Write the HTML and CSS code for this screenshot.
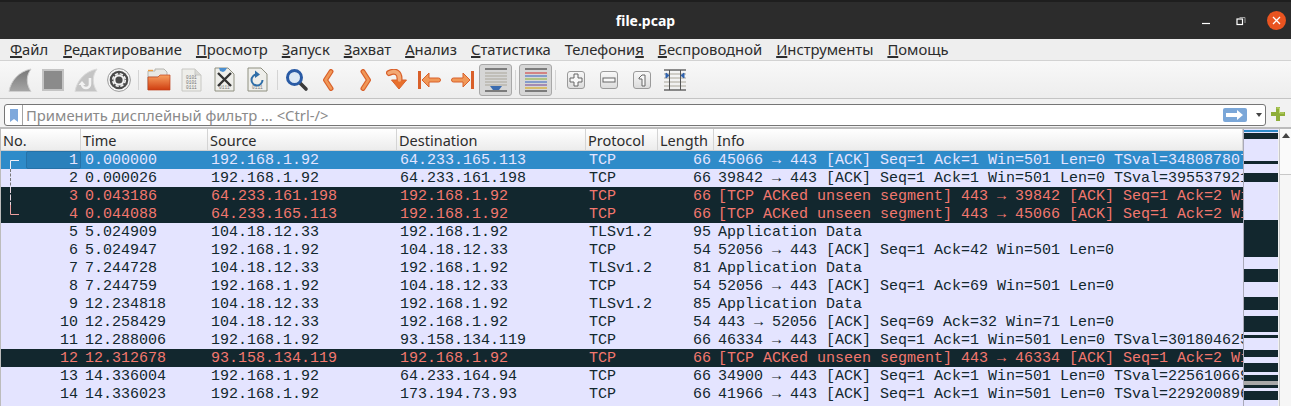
FILE: index.html
```html
<!DOCTYPE html>
<html lang="ru">

<head>
    <meta charset="UTF-8">
    <meta name="viewport" content="width=device-width, initial-scale=1.0">
    <title>file.pcap</title>
    <link rel="stylesheet" href="styles.css">
</head>

<body>
    <header class="titlebar">
        <div class="title">file.pcap</div>
        <div class="wm-buttons">
            <svg class="wm-min" width="10" height="10" viewBox="0 0 10 10"><path d="M1 7.500h8" stroke="#fff" stroke-width="1.2"/></svg>
            <svg class="wm-max" width="10" height="10" viewBox="0 0 10 10"><path d="M3.500 1.500h5.500v5.500" fill="none" stroke="#999" stroke-width="1"/><rect x="1" y="3" width="5.500" height="5.500" fill="none" stroke="#fff" stroke-width="1.2"/></svg>
            <svg class="wm-close" width="19" height="19" viewBox="0 0 19 19"><circle cx="9.500" cy="9.500" r="9.500" fill="#e95420"/><path d="M6 6l7 7M13 6l-7 7" stroke="#fff" stroke-width="1.3"/></svg>
        </div>
    </header>

    <nav class="menubar">
        <span><u>Ф</u>айл</span>
        <span><u>Р</u>едактирование</span>
        <span><u>П</u>росмотр</span>
        <span><u>З</u>апуск</span>
        <span><u>З</u>ахват</span>
        <span><u>А</u>нализ</span>
        <span><u>С</u>татистика</span>
        <span>Телефони<u>я</u></span>
        <span><u>Б</u>еспроводной</span>
        <span><u>И</u>нструменты</span>
        <span><u>П</u>омощь</span>
    </nav>

    <div class="toolbar">
        <div class="tool"><svg width="24" height="26" viewBox="0 0 24 26"><path d="M1 24.500C3 13 11 4.500 23 2c-5 7-5 15 0 22.500z" fill="url(#fin)" stroke="#cfcfcf"/><defs><linearGradient id="fin" x1="0" y1="0" x2="0" y2="1"><stop offset="0" stop-color="#777"/><stop offset="1" stop-color="#a6a6a6"/></linearGradient></defs></svg></div>
        <div class="tool"><svg width="24" height="24" viewBox="0 0 24 24"><rect x="2" y="2" width="20" height="20" fill="#8b8b8b" stroke="#c4c4c4" stroke-width="2"/></svg></div>
        <div class="tool"><svg width="24" height="26" viewBox="0 0 24 26"><path d="M1 24.500C3 13 11 4.500 23 2c-5 7-5 15 0 22.500z" fill="#c4c4c4" stroke="#dadada"/><path d="M16 11v6a4 4 0 0 1-8 0" fill="none" stroke="#f2f2f2" stroke-width="2.600"/><path d="M4.500 18l3.500-4 3.500 4z" fill="#f2f2f2"/></svg></div>
        <div class="tool"><svg width="24" height="24" viewBox="0 0 24 24"><circle cx="12" cy="12" r="11.400" fill="#f6f6f6" stroke="#9a9a9a"/><circle cx="12" cy="12" r="9.300" fill="#4a4a4a"/><circle cx="12" cy="12" r="6.300" fill="none" stroke="#f2f2f2" stroke-width="1.600" stroke-dasharray="3.300 1.650"/><circle cx="12" cy="12" r="4.600" fill="none" stroke="#f2f2f2" stroke-width="2"/></svg></div>
        <div class="sep"></div>
        <div class="tool"><svg width="24" height="23" viewBox="0 0 24 23"><path d="M1 22V3h7v-2h9l3 3v5H1z" fill="#e8e8e4" stroke="#b5b5b0"/><path d="M1 2.500h5" stroke="#f0a040" stroke-width="1.400"/><path d="M1 9h10l2-2h10v15H1z" fill="url(#folder)" stroke="#c0411a" stroke-width=".7"/><defs><linearGradient id="folder" x1="0" y1="0" x2="0" y2="1"><stop offset="0" stop-color="#f8a060"/><stop offset="1" stop-color="#cf3d10"/></linearGradient></defs></svg></div>
        <div class="tool"><svg width="21" height="24" viewBox="0 0 21 24"><path d="M1 1h13l6 6v16H1z" fill="#eeeeea" stroke="#c8c8c4"/><path d="M14 1v6h6" fill="#d8d8d4" stroke="#c8c8c4"/><text class="bits" x="5" y="11">0101</text><text class="bits" x="5" y="16">0101</text><text class="bits" x="5" y="21">0111</text></svg></div>
        <div class="tool"><svg width="21" height="25" viewBox="0 0 21 25"><path d="M1 1h13l6 6v17H1z" fill="#eeeeea" stroke="#8f9080"/><path d="M5 1h8l-2 3-2 1-3-1z" fill="#4c8fd0"/><text class="bits" x="5" y="22">0111</text><path d="M4 6l13 13M17 6L4 19" stroke="#333" stroke-width="2.400"/></svg></div>
        <div class="tool"><svg width="21" height="25" viewBox="0 0 21 25"><path d="M1 1h13l6 6v17H1z" fill="#eeeeea" stroke="#8f9080"/><text class="bits" x="5" y="22">0111</text><path d="M15.500 13a5.500 5.500 0 1 1-5.500-5.500" fill="none" stroke="#2f6ea8" stroke-width="2"/><path d="M8 3.500l5 4-5 3.500z" fill="#2f6ea8"/></svg></div>
        <div class="sep"></div>
        <div class="tool"><svg width="24" height="24" viewBox="0 0 24 24"><path d="M13 14l7 7" stroke="#3b3b3b" stroke-width="3.600" stroke-linecap="round"/><circle cx="8.500" cy="9.500" r="7" fill="#dbe8f5" stroke="#2a5ba5" stroke-width="3"/></svg></div>
        <div class="tool"><svg width="16" height="22" viewBox="0 0 16 22"><path class="arrow-edge" d="M8 2.500L2.500 11 8 19.500"/><path class="arrow-fill" d="M8 2.500L2.500 11 8 19.500"/></svg></div>
        <div class="tool"><svg width="16" height="22" viewBox="0 0 16 22"><path class="arrow-edge" d="M7 2.500L12.500 11 7 19.500"/><path class="arrow-fill" d="M7 2.500L12.500 11 7 19.500"/></svg></div>
        <div class="tool"><svg width="21" height="22" viewBox="0 0 21 22"><path d="M3 4C9 1 14 3 13.500 11" fill="none" stroke="#d9602a" stroke-width="6" stroke-linecap="round"/><path d="M6 11h15l-7.500 9z" fill="#e8702c" stroke="#d9602a" stroke-linejoin="round" transform="translate(-.5 0)"/><path d="M3 4C9 1 14 3 13.500 11" fill="none" stroke="#f2a874" stroke-width="3.600" stroke-linecap="round"/></svg></div>
        <div class="tool"><svg width="25" height="20" viewBox="0 0 25 20"><path d="M2.500 1v18" stroke="#d9602a" stroke-width="3"/><path d="M5 10l7-7v5h9.500a2 2 0 0 1 0 4H12v5z" fill="#f09858" stroke="#d9602a" stroke-linejoin="round"/></svg></div>
        <div class="tool"><svg width="25" height="20" viewBox="0 0 25 20"><path d="M22.500 1v18" stroke="#d9602a" stroke-width="3"/><path d="M20 10l-7-7v5H3.500a2 2 0 0 0 0 4H13v5z" fill="#f09858" stroke="#d9602a" stroke-linejoin="round"/></svg></div>
        <div class="tool tool-on"><svg width="24" height="24" viewBox="0 0 24 24"><path d="M1 1h22M1 23h22" stroke="#222" stroke-width="1"/><path d="M1 5h22M1 8h22M1 11h22M1 14h22M1 17h22" stroke="#aaa69a" stroke-width="1"/><path d="M6 18h12l-3 4H9z" fill="#3b6cb0"/></svg></div>
        <div class="sep"></div>
        <div class="tool tool-on"><svg width="24" height="24" viewBox="0 0 24 24"><path d="M1 1h22M1 23h22" stroke="#222"/><path d="M1 5h22" stroke="#d03030"/><path d="M1 8h22" stroke="#3060c0"/><path d="M1 11h22" stroke="#8ab030"/><path d="M1 14h22" stroke="#3060c0"/><path d="M1 17h22" stroke="#704090"/><path d="M1 20h22" stroke="#d8a000"/></svg></div>
        <div class="sep"></div>
        <div class="tool"><div class="zoom-btn"><svg width="14" height="14" viewBox="0 0 14 14"><path d="M5 1h4v4h4v4H9v4H5V9H1V5h4z" fill="#f8f8f8" stroke="#666"/></svg></div></div>
        <div class="tool"><div class="zoom-btn"><svg width="14" height="14" viewBox="0 0 14 14"><rect x="1" y="5" width="12" height="4" fill="#f8f8f8" stroke="#666"/></svg></div></div>
        <div class="tool"><div class="zoom-btn"><svg width="14" height="14" viewBox="0 0 14 14"><path d="M4 5l3-3h3v11H7V6H4z" fill="#f8f8f8" stroke="#666"/></svg></div></div>
        <div class="tool"><svg width="22" height="22" viewBox="0 0 22 22"><path d="M0 1h22M0 21h22" stroke="#222"/><path d="M0 5h22M0 9h22M0 13h22M0 17h22" stroke="#aaa69a"/><path d="M5.500 1v20M16.500 1v20" stroke="#555"/><path d="M2 4l3 2.500L2 9zM20 4l-3 2.500L20 9z" fill="#2f62ad" stroke="#2f62ad"/></svg></div>
    </div>

    <div class="filterbar">
        <div class="filter-box">
            <div class="filter-mark"><svg width="8" height="13" viewBox="0 0 8 13"><path d="M0 0h8v13L4 10l-4 3z" fill="#7fa9dc"/></svg></div>
            <div class="filter-text">Применить дисплейный фильтр … &lt;Ctrl-/&gt;</div>
            <div class="filter-go"><svg width="18" height="10" viewBox="0 0 18 10"><path d="M0 3h11V0l6 5-6 5V7H0z" fill="#fff"/></svg></div>
            <div class="filter-drop"></div>
        </div>
        <svg class="filter-add" width="14" height="14" viewBox="0 0 14 14"><path d="M5 0h4v5h5v4H9v5H5V9H0V5h5z" fill="#8fae3a"/><path d="M5.500 1h3v5h4.500" fill="none" stroke="#c5dc78"/></svg>
    </div>

    <main class="packets">
        <div class="packet-list">
            <div class="row head">
                <div>No.</div><div>Time</div><div>Source</div><div>Destination</div><div>Protocol</div><div>Length</div><div>Info</div>
            </div>
            <div class="rows">
                <div class="row sel"><div class="num focus">1</div><div>0.000000</div><div>192.168.1.92</div><div>64.233.165.113</div><div>TCP</div><div class="num">66</div><div>45066 → 443 [ACK] Seq=1 Ack=1 Win=501 Len=0 TSval=3480878071</div></div>
                <div class="row"><div class="num">2</div><div>0.000026</div><div>192.168.1.92</div><div>64.233.161.198</div><div>TCP</div><div class="num">66</div><div>39842 → 443 [ACK] Seq=1 Ack=1 Win=501 Len=0 TSval=3955379212</div></div>
                <div class="row bad"><div class="num">3</div><div>0.043186</div><div>64.233.161.198</div><div>192.168.1.92</div><div>TCP</div><div class="num">66</div><div>[TCP ACKed unseen segment] 443 → 39842 [ACK] Seq=1 Ack=2 Win=65535</div></div>
                <div class="row bad"><div class="num">4</div><div>0.044088</div><div>64.233.165.113</div><div>192.168.1.92</div><div>TCP</div><div class="num">66</div><div>[TCP ACKed unseen segment] 443 → 45066 [ACK] Seq=1 Ack=2 Win=65535</div></div>
                <div class="row"><div class="num">5</div><div>5.024909</div><div>104.18.12.33</div><div>192.168.1.92</div><div>TLSv1.2</div><div class="num">95</div><div>Application Data</div></div>
                <div class="row"><div class="num">6</div><div>5.024947</div><div>192.168.1.92</div><div>104.18.12.33</div><div>TCP</div><div class="num">54</div><div>52056 → 443 [ACK] Seq=1 Ack=42 Win=501 Len=0</div></div>
                <div class="row"><div class="num">7</div><div>7.244728</div><div>104.18.12.33</div><div>192.168.1.92</div><div>TLSv1.2</div><div class="num">81</div><div>Application Data</div></div>
                <div class="row"><div class="num">8</div><div>7.244759</div><div>192.168.1.92</div><div>104.18.12.33</div><div>TCP</div><div class="num">54</div><div>52056 → 443 [ACK] Seq=1 Ack=69 Win=501 Len=0</div></div>
                <div class="row"><div class="num">9</div><div>12.234818</div><div>104.18.12.33</div><div>192.168.1.92</div><div>TLSv1.2</div><div class="num">85</div><div>Application Data</div></div>
                <div class="row"><div class="num">10</div><div>12.258429</div><div>104.18.12.33</div><div>192.168.1.92</div><div>TCP</div><div class="num">54</div><div>443 → 52056 [ACK] Seq=69 Ack=32 Win=71 Len=0</div></div>
                <div class="row"><div class="num">11</div><div>12.288006</div><div>192.168.1.92</div><div>93.158.134.119</div><div>TCP</div><div class="num">66</div><div>46334 → 443 [ACK] Seq=1 Ack=1 Win=501 Len=0 TSval=3018046255</div></div>
                <div class="row bad"><div class="num">12</div><div>12.312678</div><div>93.158.134.119</div><div>192.168.1.92</div><div>TCP</div><div class="num">66</div><div>[TCP ACKed unseen segment] 443 → 46334 [ACK] Seq=1 Ack=2 Win=65535</div></div>
                <div class="row"><div class="num">13</div><div>14.336004</div><div>192.168.1.92</div><div>64.233.164.94</div><div>TCP</div><div class="num">66</div><div>34900 → 443 [ACK] Seq=1 Ack=1 Win=501 Len=0 TSval=2256106695</div></div>
                <div class="row"><div class="num">14</div><div>14.336023</div><div>192.168.1.92</div><div>173.194.73.93</div><div>TCP</div><div class="num">66</div><div>41966 → 443 [ACK] Seq=1 Ack=1 Win=501 Len=0 TSval=2292008960</div></div>
                <svg class="tree" width="26" height="72" viewBox="0 0 26 72"><path d="M18 9.500H9.500V18" fill="none" stroke="#f0f0f8"/><path d="M9.500 18v18" fill="none" stroke="#777" stroke-dasharray="3 1.500"/><path d="M9.500 36v18" fill="none" stroke="#e8d8e0" stroke-dasharray="6 1.500"/><path d="M9.500 54v9.500H18" fill="none" stroke="#eda0a0"/></svg>
            </div>
        </div>

        <div class="minimap">
            <div class="m-sel" style="height:2px"></div>
            <div style="height:1px"></div>
            <div class="m-bad" style="height:6px"></div>
            <div style="height:22px"></div>
            <div class="m-bad" style="height:3px"></div>
            <div style="height:9px"></div>
            <div class="m-bad" style="height:9px"></div>
            <div style="height:38px"></div>
            <div class="m-bad" style="height:37px"></div>
            <div style="height:12px"></div>
            <div class="m-bad" style="height:13px"></div>
            <div style="height:15px"></div>
            <div class="m-bad" style="height:13px"></div>
            <div style="height:6px"></div>
            <div class="m-bad" style="height:16px"></div>
            <div style="height:3px"></div>
            <div class="m-bad" style="height:3px"></div>
            <div style="height:12px"></div>
            <div class="m-bad" style="height:7px"></div>
            <div style="height:6px"></div>
            <div class="m-bad" style="height:9px"></div>
            <div style="height:3px"></div>
            <div class="m-bad" style="height:6px"></div>
            <div class="m-pos" style="height:4px"></div>
            <div class="m-bad" style="height:3px"></div>
            <div style="height:3px"></div>
            <div class="m-bad" style="height:9px"></div>
        </div>

        <div class="scrollbar">
            <div class="scroll-up"><span class="up-arrow"></span></div>
        </div>
    </main>
</body>

</html>
```
FILE: styles.css
```css
* {
    box-sizing: border-box;
    margin: 0;
    padding: 0;
}

html,
body {
    width: 1291px;
    height: 406px;
    overflow: hidden;
}

body {
    display: flex;
    flex-direction: column;
    background-color: #f2f2f2;
    font-family: "Noto Sans", sans-serif;
    font-size: 14px;
    color: #2c2c2c;
}

/* barra de titulo */
.titlebar {
    flex: 0 0 39px;
    position: relative;
    display: flex;
    align-items: center;
    justify-content: center;
    background-color: #2c2c2c;
    border-top: 2px solid #1e1e1e;
}

.title {
    color: #fff;
    font-weight: 700;
    font-size: 14px;
}

.wm-buttons {
    position: absolute;
    top: 0;
    bottom: 0;
    right: 5px;
    display: flex;
    align-items: center;
}

.wm-min {
    margin-right: 25px;
}

.wm-max {
    margin-right: 21px;
}

/* menu */
.menubar {
    flex: 0 0 22px;
    display: flex;
    align-items: center;
    gap: 14px;
    padding-left: 10px;
    padding-bottom: 1px;
    line-height: 20px;
    background-color: #eeeeee;
    border-bottom: 1px solid #d2d2d2;
    font-size: 14.8px;
    white-space: nowrap;
}

.menubar span:first-child {
    margin-right: 1px;
}

.menubar u {
    text-decoration-thickness: 2px;
    text-underline-offset: 1px;
}

/* barra de herramientas */
.toolbar {
    flex: 0 0 38px;
    display: flex;
    align-items: center;
    padding-left: 3px;
    background: linear-gradient(#f8f8f8, #ededed);
    border-bottom: 1px solid #c4c4c4;
}

.tool {
    flex: 0 0 33px;
    height: 32px;
    display: flex;
    align-items: center;
    justify-content: center;
}

.tool-on {
    background-color: #d6d6d6;
    border: 1px solid #a8a8a8;
    border-radius: 3px;
}

.sep {
    flex: 0 0 7px;
    height: 20px;
    background: linear-gradient(to right, transparent 3px, #d4d4d4 3px, #d4d4d4 4px, transparent 4px);
}

.zoom-btn {
    width: 18px;
    height: 18px;
    display: flex;
    align-items: center;
    justify-content: center;
    background: linear-gradient(#f8f8f8, #dcdcdc);
    border: 1px solid #9a9a9a;
    border-radius: 3px;
}

.arrow-edge,
.arrow-fill {
    fill: none;
    stroke-linejoin: round;
    stroke-linecap: round;
}

.arrow-edge {
    stroke: #d9602a;
    stroke-width: 5;
}

.arrow-fill {
    stroke: #f09858;
    stroke-width: 2.6;
}

.bits {
    font-family: "Liberation Mono", monospace;
    font-size: 4.500px;
    fill: #777;
}

/* filtro */
.filterbar {
    flex: 0 0 28px;
    display: flex;
    align-items: flex-start;
    padding: 5px 6px 0 4px;
    background-color: #f2f2f2;
}

.filter-box {
    flex: 1;
    height: 22px;
    display: flex;
    align-items: center;
    line-height: 20px;
    background-color: #fff;
    border: 1px solid #767676;
    border-radius: 3px;
}

.filter-mark {
    flex: 0 0 18px;
    height: 100%;
    display: flex;
    align-items: center;
    justify-content: center;
    border-right: 1px solid #a4a4a4;
}

.filter-text {
    flex: 1;
    padding-left: 3px;
    color: #8a8a8a;
    font-size: 14.8px;
    white-space: nowrap;
}

.filter-go {
    flex: 0 0 24px;
    height: 14px;
    margin-right: 1px;
    display: flex;
    align-items: center;
    justify-content: center;
    background-color: #7ba7d8;
    border-radius: 2px;
}

.filter-drop {
    width: 0;
    height: 0;
    margin: 0 3px 0 8px;
    border-left: 3px solid transparent;
    border-right: 3px solid transparent;
    border-top: 4px solid #444;
}

.filter-add {
    margin: 3px 0 0 5px;
}

/* lista de paquetes */
.packets {
    flex: 1;
    display: flex;
    min-height: 0;
    border-top: 2px solid #bcbcbc;
    border-left: 1px solid #bcbcbc;
}

.packet-list {
    flex: 0 0 1242px;
    overflow: hidden;
    background-color: #e4e4ff;
}

.row {
    display: grid;
    grid-template-columns: 80px 127px 189px 189px 72px 56px 1fr;
    height: 18px;
    padding-top: 1px;
    font-family: "Liberation Mono", monospace;
    font-size: 15px;
    line-height: 17px;
    color: #12272e;
    white-space: nowrap;
}

.row > div {
    overflow: hidden;
    padding-left: 3px;
}

.row > div:nth-child(2),
.row > div:nth-child(7) {
    padding-left: 4px;
}

.row > .num {
    padding-left: 0;
    padding-right: 3px;
    text-align: right;
}

.row > .focus {
    margin: -1px 0 0 25px;
    height: 18px;
    background-color: #2a80bb;
    border: 1px solid #2672a8;
    border-radius: 2px;
    line-height: 17px;
    padding-right: 2px;
}

.head {
    height: 22px;
    padding-top: 0;
    font-family: "Noto Sans", sans-serif;
    font-size: 14.5px;
    line-height: 23px;
    color: #2c2c2c;
    background: linear-gradient(#ffffff, #ececec);
    border-bottom: 1px solid #d0d0d0;
}

.head > div {
    height: 21px;
    border-right: 1px solid #d4d4d4;
}

.head > div:nth-child(n) {
    padding-left: 2px;
}

.head > div:nth-child(7) {
    padding-left: 3px;
}

.rows {
    position: relative;
}

.tree {
    position: absolute;
    top: 0;
    left: 0;
}

.sel {
    background-color: #2e8bc9;
    color: #e4e4ff;
}

.bad {
    background-color: #12272e;
    color: #f2776e;
}

/* mapa lateral */
.minimap {
    flex: 0 0 35px;
    padding-top: 1px;
    display: flex;
    flex-direction: column;
    background-color: #e4e4ff;
    border-left: 1px solid #a9a9b8;
}

.m-sel {
    background-color: #2e8bc9;
}

.m-bad {
    background-color: #12272e;
}

.m-pos {
    background-color: #a8a8a8;
}

.scrollbar {
    flex: 1;
    margin-left: 1px;
    background-color: #f6f6f6;
    border-left: 1px solid #c8c8c8;
}

.scroll-up {
    height: 46px;
    padding-top: 4px;
    display: flex;
    justify-content: center;
    background-color: #fafafa;
    border-bottom: 1px solid #c8c8c8;
}

.up-arrow {
    width: 0;
    height: 0;
    border-left: 4px solid transparent;
    border-right: 4px solid transparent;
    border-bottom: 5px solid #444;
}
```
